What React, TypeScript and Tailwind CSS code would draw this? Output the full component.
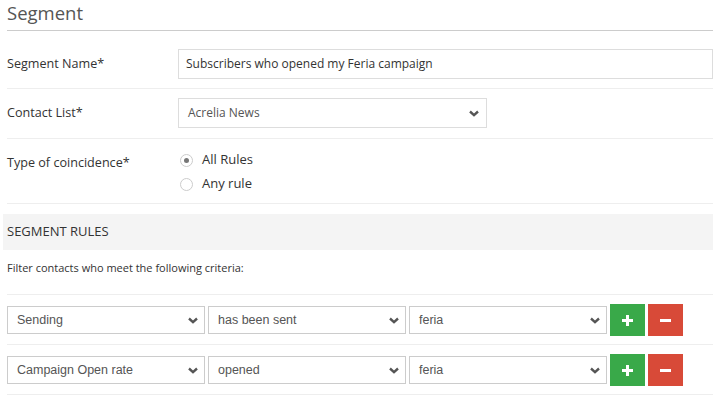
import type { ReactNode } from "react";

const openSans = "font-['Open_Sans',sans-serif]";

function Chevron() {
  return (
    <svg aria-hidden="true" className="h-[7px] w-[10px] shrink-0" viewBox="0 0 10 7">
      <path d="M1 1.5l4 3.6L9 1.5" fill="none" stroke="#555" strokeWidth="2.4" />
    </svg>
  );
}

type FakeSelectProps = {
  value: string;
  className?: string;
};

function RuleSelect({ value, className = "" }: FakeSelectProps) {
  return (
    <div
      className={`flex h-[28px] w-[198px] items-center justify-between border border-[#ccc] bg-white pl-[9px] pr-[6px] font-['Liberation_Sans',Arial,sans-serif] text-[12.5px] text-[#555] ${className}`}
    >
      <span>{value}</span>
      <Chevron />
    </div>
  );
}

function FormRow({ label, children, className = "" }: { label: string; children: ReactNode; className?: string }) {
  return (
    <div className={`flex border-b border-[#eee] ${className}`}>
      <div className="w-[171px] shrink-0 pt-[5px] text-[12.6px] leading-[20px] text-[#333]">{label}</div>
      <div className="flex-1">{children}</div>
    </div>
  );
}

function Radio({ checked, label }: { checked?: boolean; label: string }) {
  return (
    <div className="flex h-[24px] items-center">
      <span className="ml-[2px] flex h-[13px] w-[13px] items-center justify-center rounded-full border border-[#ccc] bg-white">
        {checked && <span className="h-[5px] w-[5px] rounded-full bg-[#777]" />}
      </span>
      <span className="ml-[9px] text-[13px] text-[#333]">{label}</span>
    </div>
  );
}

function RuleRow({ field, operator, value }: { field: string; operator: string; value: string }) {
  return (
    <div className="flex items-center gap-[3px] border-b border-[#eee] pb-[8px] pt-[9px]">
      <RuleSelect value={field} />
      <RuleSelect value={operator} />
      <RuleSelect value={value} />
      <button
        aria-label="Add rule"
        className="flex h-[32px] w-[35px] items-center justify-center bg-[#39a949]"
        type="button"
      >
        <svg aria-hidden="true" className="h-[11px] w-[11px]" viewBox="0 0 11 11">
          <path d="M5.5 0v11M0 5.5h11" stroke="#fff" strokeWidth="3" />
        </svg>
      </button>
      <button
        aria-label="Remove rule"
        className="flex h-[32px] w-[35px] items-center justify-center bg-[#d84a38]"
        type="button"
      >
        <svg aria-hidden="true" className="h-[3px] w-[11px]" viewBox="0 0 11 3">
          <path d="M0 1.5h11" stroke="#fff" strokeWidth="3" />
        </svg>
      </button>
    </div>
  );
}

export default function App() {
  return (
    <div className={`min-h-[406px] bg-white ${openSans}`}>
      <div className="pl-[7px]">
        <h1 className="border-b border-[#ccc] pb-[4px] text-[18.5px] font-normal leading-[26px] text-[#555]">Segment</h1>

        <FormRow label="Segment Name*" className="pb-[9px] pt-[18px]">
          <div className="flex h-[30px] items-center border border-[#ddd] bg-white pl-[7px] text-[12px] text-[#333]">
            Subscribers who opened my Feria campaign
          </div>
        </FormRow>

        <FormRow label="Contact List*" className="pb-[10px] pt-[9px]">
          <div className="flex h-[30px] w-[309px] items-center justify-between border border-[#ddd] bg-white pl-[9px] pr-[7px] text-[12px] text-[#555]">
            <span>Acrelia News</span>
            <Chevron />
          </div>
        </FormRow>

        <FormRow label="Type of coincidence*" className="pb-[7px] pt-[9px]">
          <Radio checked label="All Rules" />
          <Radio label="Any rule" />
        </FormRow>
      </div>

      <div className="ml-[3px] mt-[10px] flex h-[36px] items-center bg-[#f4f4f4] pl-[4px] text-[13px] text-[#333]">
        SEGMENT RULES
      </div>

      <div className="pl-[7px]">
        <p className="h-[45px] border-b border-[#eee] pt-[10px] text-[11px] text-[#333]">
          Filter contacts who meet the following criteria:
        </p>
        <RuleRow field="Sending" operator="has been sent" value="feria" />
        <RuleRow field="Campaign Open rate" operator="opened" value="feria" />
      </div>
    </div>
  );
}
